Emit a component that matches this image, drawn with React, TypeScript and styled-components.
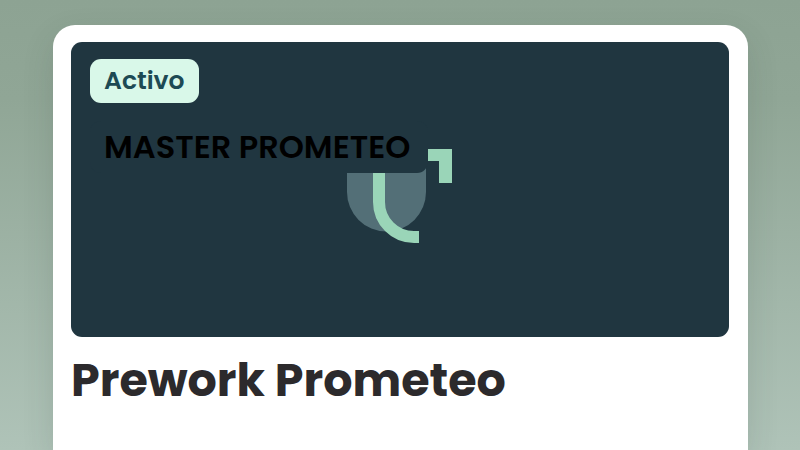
import React from "react";
import styled, { createGlobalStyle } from "styled-components";

const GlobalStyle = createGlobalStyle`
  *, *::before, *::after { box-sizing: border-box; }
  body {
    margin: 0;
    font-family: Poppins, Inter, "Open Sans", sans-serif;
  }
`;

const Page = styled.main`
  display: flex;
  min-height: 100vh;
  padding: 25px 52px 0 53px;
  background: linear-gradient(180deg, #8da393 0%, #90a696 22%, #afc3b8 100%);
`;

const Card = styled.article`
  flex: 1;
  min-width: 0;
  padding: 17px 19px 18px 18px;
  border-radius: 22px 22px 0 0;
  background: #ffffff;
  box-shadow: 0 12px 32px rgba(40, 60, 48, 0.14);
`;

const Cover = styled.div`
  display: grid;
  min-height: 295px;
  border-radius: 11px;
  background: #203640;
`;

const Logo = styled.svg`
  grid-area: 1 / 1;
  place-self: center;
`;

const Tags = styled.div`
  grid-area: 1 / 1;
  z-index: 1;
  display: flex;
  flex-direction: column;
  align-items: flex-start;
  gap: 18px;
  padding: 17px 19px;
`;

const Tag = styled.span<{ $kind: "status" | "program" }>`
  padding: ${({ $kind }) => ($kind === "status" ? "7px 14px" : "6px 18px 6px 14px")};
  border-radius: 11px;
  background: ${({ $kind }) => ($kind === "status" ? "#d9f8e9" : "#203640")};
  color: ${({ $kind }) => ($kind === "status" ? "#1d4a54" : "#000000")};
  font-size: ${({ $kind }) => ($kind === "status" ? 25 : 32)}px;
  line-height: ${({ $kind }) => ($kind === "status" ? 30 : 40)}px;
  font-weight: 600;
`;

const Title = styled.h1`
  margin: 15px 0 0;
  color: #2c2a2c;
  font-size: 46px;
  line-height: 56px;
  font-weight: 700;
`;

export default function App() {
  return (
    <>
      <GlobalStyle />
      <Page>
        <Card>
          <Cover>
            <Logo width="106" height="107" viewBox="0 0 106 107" aria-hidden="true">
              <path d="M0 0H79V56A39.500 39.500 0 0 1 0 56Z" fill="#536f77" />
              <path d="M32 13V66A35 35 0 0 0 67 101H72" fill="none" stroke="#9ad5b8" strokeWidth="12" />
              <path d="M70 13H105V47H92V25H70Z" fill="#9ad5b8" />
            </Logo>
            <Tags>
              <Tag $kind="status">Activo</Tag>
              <Tag $kind="program">MASTER PROMETEO</Tag>
            </Tags>
          </Cover>
          <Title>Prework Prometeo</Title>
        </Card>
      </Page>
    </>
  );
}
